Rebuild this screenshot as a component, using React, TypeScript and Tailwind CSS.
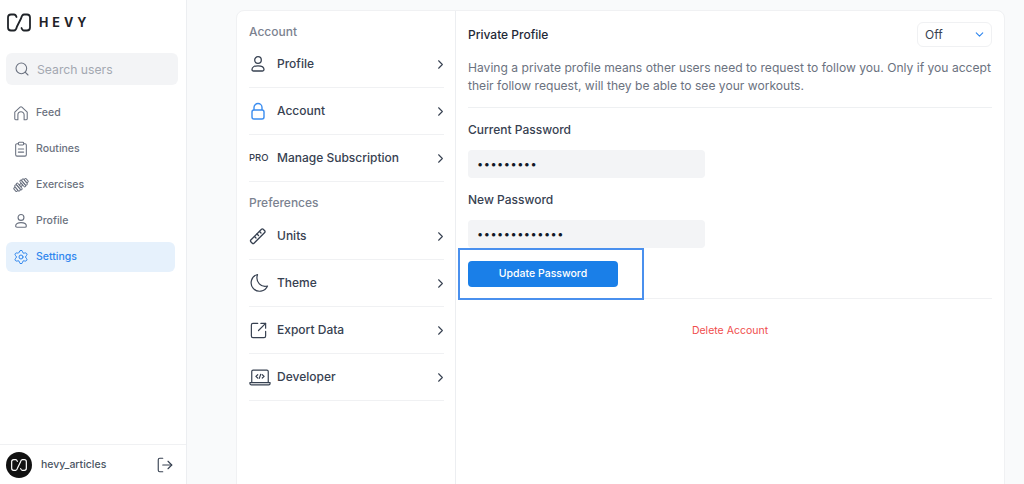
import { ChevronDown, ChevronRight, Search, Settings, SquareArrowOutUpRight, LogOut } from 'lucide-react'
import type { ReactNode } from 'react'

type IconProps = { className?: string }

function HevyMark({ className }: IconProps) {
  return (
    <svg viewBox="0 0 24 18" fill="none" stroke="currentColor" strokeWidth="1.800" strokeLinecap="round" strokeLinejoin="round" className={className}>
      <path d="M9.500 3.500C9 2 8.500 1 7 1H4a3 3 0 0 0-3 3v10a3 3 0 0 0 3 3h3c2 0 2.500-2 3-4l4-8c.5-2 1-4 3-4h3a3 3 0 0 1 3 3v10a3 3 0 0 1-3 3h-3c-1.500 0-2-1-2.500-2.500" />
    </svg>
  )
}

function HomeIcon({ className }: IconProps) {
  return (
    <svg viewBox="0 0 18 18" fill="none" stroke="currentColor" strokeWidth="1.200" strokeLinejoin="round" className={className}>
      <path d="M2 8 8 2.400a1.500 1.500 0 0 1 2 0L16 8v7.500a1 1 0 0 1-1 1h-2.500V11a3.500 3.500 0 0 0-7 0v5.500H3a1 1 0 0 1-1-1Z" />
    </svg>
  )
}

function ClipboardIcon({ className }: IconProps) {
  return (
    <svg viewBox="0 0 18 18" fill="none" stroke="currentColor" strokeWidth="1.200" strokeLinecap="round" strokeLinejoin="round" className={className}>
      <path d="M6 3H4.500A1.500 1.500 0 0 0 3 4.500v11A1.500 1.500 0 0 0 4.500 17h9a1.500 1.500 0 0 0 1.500-1.500v-11A1.500 1.500 0 0 0 13.500 3H12" />
      <rect x="6" y="1.500" width="6" height="3" rx="1" />
      <path d="M6 9h6M6 12.500h6" />
    </svg>
  )
}

function DumbbellIcon({ className }: IconProps) {
  return (
    <svg viewBox="0 0 18 18" fill="none" stroke="currentColor" strokeWidth="1.100" strokeLinejoin="round" className={className}>
      <g transform="rotate(-40 9 9)">
        <rect x="0" y="6.500" width="2.500" height="5" rx="1" />
        <rect x="2.500" y="5" width="2.800" height="8" rx="1" />
        <rect x="5.300" y="4.500" width="2.200" height="9" rx="1" />
        <rect x="7.500" y="7.600" width="3" height="2.800" />
        <rect x="10.500" y="4.500" width="2.200" height="9" rx="1" />
        <rect x="12.700" y="5" width="2.800" height="8" rx="1" />
        <rect x="15.500" y="6.500" width="2.500" height="5" rx="1" />
      </g>
    </svg>
  )
}

function PersonIcon({ className }: IconProps) {
  return (
    <svg viewBox="0 0 18 18" fill="none" stroke="currentColor" strokeWidth="1.300" strokeLinejoin="round" className={className}>
      <circle cx="9" cy="5" r="3.300" />
      <path d="M3 14.500C3 12 5.500 10.800 9 10.800s6 1.200 6 3.700c0 1-.6 1.500-1.500 1.500h-9C3.600 16 3 15.500 3 14.500Z" />
    </svg>
  )
}

function LockIcon({ className }: IconProps) {
  return (
    <svg viewBox="0 0 18 18" fill="none" stroke="currentColor" strokeWidth="1.400" strokeLinejoin="round" className={className}>
      <path d="M5 8V5.500a4 4 0 0 1 8 0V8" />
      <rect x="3" y="8" width="12" height="9" rx="2" />
    </svg>
  )
}

function RulerIcon({ className }: IconProps) {
  return (
    <svg viewBox="0 0 18 18" fill="none" stroke="currentColor" strokeWidth="1.300" strokeLinecap="round" strokeLinejoin="round" className={className}>
      <path d="M1.800 13 12.500 2.300a1.200 1.200 0 0 1 1.700 0l1.500 1.500a1.200 1.200 0 0 1 0 1.700L5 16.200a1.200 1.200 0 0 1-1.700 0l-1.500-1.500a1.200 1.200 0 0 1 0-1.700Z" />
      <path d="M5.500 9.500 7 11M8 7l1.500 1.500M10.500 4.500 12 6" />
    </svg>
  )
}

function MoonIcon({ className }: IconProps) {
  return (
    <svg viewBox="0 0 20 20" fill="none" stroke="currentColor" strokeWidth="1.200" strokeLinejoin="round" className={className}>
      <path d="M8.500 1.500a8.500 8.500 0 1 0 10 11.500C12.500 15 6 9 8.500 1.500Z" />
    </svg>
  )
}

function LaptopCode({ className }: IconProps) {
  return (
    <svg viewBox="0 0 24 20" fill="none" stroke="currentColor" strokeWidth="1.300" strokeLinecap="round" strokeLinejoin="round" className={className}>
      <path d="M3 15V3.500A1.500 1.500 0 0 1 4.500 2h15A1.500 1.500 0 0 1 21 3.500V15" />
      <path d="M1 15.500H23V16.500A1.500 1.500 0 0 1 21.500 18H2.500A1.500 1.500 0 0 1 1 16.500Z" />
      <path d="M9.500 7 7.500 8.800 9.500 10.600M14.500 7 16.500 8.800 14.500 10.600M12.800 6.500 11.200 11" />
    </svg>
  )
}

function NavItem({ icon, label, active }: { icon: ReactNode; label: string; active?: boolean }) {
  return (
    <div className={`flex h-[30px] w-[169px] items-center gap-[7px] rounded-md pl-[7px] text-[10.500px] font-medium ${active ? 'bg-[#e6f1fc] text-[#2f86ee]' : 'text-[#6b7280]'}`}>
      {icon}
      <span>{label}</span>
    </div>
  )
}

function MenuRow({ icon, label }: { icon: ReactNode; label: string }) {
  return (
    <div className="flex h-[47px] items-center border-b border-[#f0f1f3] text-[12px] font-medium text-[#374151]">
      <div className="flex w-7 shrink-0 items-center justify-start">{icon}</div>
      <span className="flex-1">{label}</span>
      <ChevronRight size={15} strokeWidth={1.700} className="-mr-[4px] text-[#374151]" />
    </div>
  )
}

function PasswordField({ label, value }: { label: string; value: string }) {
  return (
    <div>
      <p className="h-[21px] text-[12px] leading-[21px] font-medium text-[#374151]">{label}</p>
      <div className="mt-[10px] flex h-7 w-[237px] items-center rounded bg-[#f3f4f6] pl-[9px] text-[11px] tracking-[0.500px] text-[#111827]">
        {value}
      </div>
    </div>
  )
}

export default function App() {
  return (
    <div className="flex h-[484px] w-[1024px] overflow-hidden bg-[#f9fafb] font-['Inter',sans-serif]">
      <aside className="flex h-full w-[187px] shrink-0 flex-col border-r border-[#eceef1] bg-white">
        <div className="flex h-[53px] items-start gap-2 pt-[13px] pl-[7px] text-[#1f2328]">
          <HevyMark className="h-[19px] w-6" />
          <span className="text-[12.500px] leading-[19px] font-bold tracking-[4px]">HEVY</span>
        </div>
        <div className="mx-1.5 flex h-8 w-[172px] items-center gap-[7px] rounded-md bg-[#f3f4f6] pl-2 text-[12.200px] text-[#a3a8b1]">
          <Search size={16} strokeWidth={1.600} className="text-[#6b7280]" />
          <span className="translate-y-px">Search users</span>
        </div>
        <nav className="mt-[13px] flex flex-col gap-1.5 pl-1.5">
          <NavItem label="Feed" icon={<HomeIcon className="h-4 w-4" />} />
          <NavItem label="Routines" icon={<ClipboardIcon className="h-4 w-4" />} />
          <NavItem label="Exercises" icon={<DumbbellIcon className="h-4 w-4" />} />
          <NavItem label="Profile" icon={<PersonIcon className="h-4 w-4" />} />
          <NavItem label="Settings" active icon={<Settings size={16} strokeWidth={1.500} />} />
        </nav>
        <div className="mt-auto flex h-[40px] items-center border-t border-[#f0f1f3] pl-1.5">
          <div className="flex h-[26px] w-[26px] items-center justify-center rounded-full bg-[#111] text-white">
            <HevyMark className="h-3 w-4" />
          </div>
          <span className="ml-[9px] flex-1 text-[10.500px] font-medium text-[#4b5563]">hevy_articles</span>
          <LogOut size={18} strokeWidth={1.500} className="mr-[12px] text-[#374151]" />
        </div>
      </aside>

      <main className="flex-1 pt-2.5 pl-[49px]">
        <div className="relative flex h-[500px] w-[769px] rounded-lg border border-[#f0f1f3] bg-white">
          <section className="w-[219px] shrink-0 border-r border-[#eceef1] pr-[11px] pl-3">
            <p className="mt-[13px] text-[12px] leading-[16px] font-medium text-[#7b8290]">Account</p>
            <div className="mt-[1px]">
              <MenuRow label="Profile" icon={<PersonIcon className="h-[18px] w-[18px] text-[#374151]" />} />
              <MenuRow label="Account" icon={<LockIcon className="h-[18px] w-[18px] text-[#3b8df0]" />} />
              <MenuRow label="Manage Subscription" icon={<span className="text-[9.500px] font-medium">PRO</span>} />
            </div>
            <p className="mt-[13px] text-[12px] leading-[16px] font-medium text-[#7b8290]">Preferences</p>
            <div className="mt-[2px]">
              <MenuRow label="Units" icon={<RulerIcon className="h-[18px] w-[18px]" />} />
              <MenuRow label="Theme" icon={<MoonIcon className="h-5 w-5" />} />
              <MenuRow label="Export Data" icon={<SquareArrowOutUpRight size={19} strokeWidth={1.500} />} />
              <MenuRow label="Developer" icon={<LaptopCode className="h-[19px] w-[22px]" />} />
            </div>
          </section>

          <section className="flex-1 pr-[12px] pl-3">
            <div className="flex h-[36px] items-end justify-between">
              <span className="mb-[3px] text-[12px] leading-[18px] font-medium text-[#1f2937]">Private Profile</span>
              <div className="flex h-[25px] w-[75px] items-center justify-between rounded-md border border-[#f0f1f3] pr-[5px] pl-[7px] text-[12px] text-[#374151]">
                <span>Off</span>
                <ChevronDown size={13} strokeWidth={2} className="text-[#2f86ee]" />
              </div>
            </div>
            <p className="mt-[12px] border-b border-[#eef0f2] pb-[12px] text-[12.100px] leading-[18px] text-[#6b7280]">
              Having a private profile means other users need to request to follow you. Only if you accept their follow request, will they be able to see your workouts.
            </p>
            <div className="mt-[11px] flex flex-col gap-[11px]">
              <PasswordField label="Current Password" value="•••••••••" />
              <PasswordField label="New Password" value="•••••••••••••" />
            </div>
            <div className="mt-[13px] border-b border-[#f0f1f3] pb-[11px]">
              <button type="button" className="flex h-[26px] w-[150px] items-center justify-center rounded bg-[#1a7fe8] text-[10.500px] font-medium text-white">
                Update Password
              </button>
            </div>
            <p className="mt-[25px] text-center text-[10.500px] leading-[14px] text-[#f04d4d]">Delete Account</p>
          </section>

          {/* annotation drawn over the screenshot */}
          <div className="absolute top-[237px] left-[221px] h-[52px] w-[186px] border-2 border-[#4a90ee]" />
        </div>
      </main>
    </div>
  )
}
